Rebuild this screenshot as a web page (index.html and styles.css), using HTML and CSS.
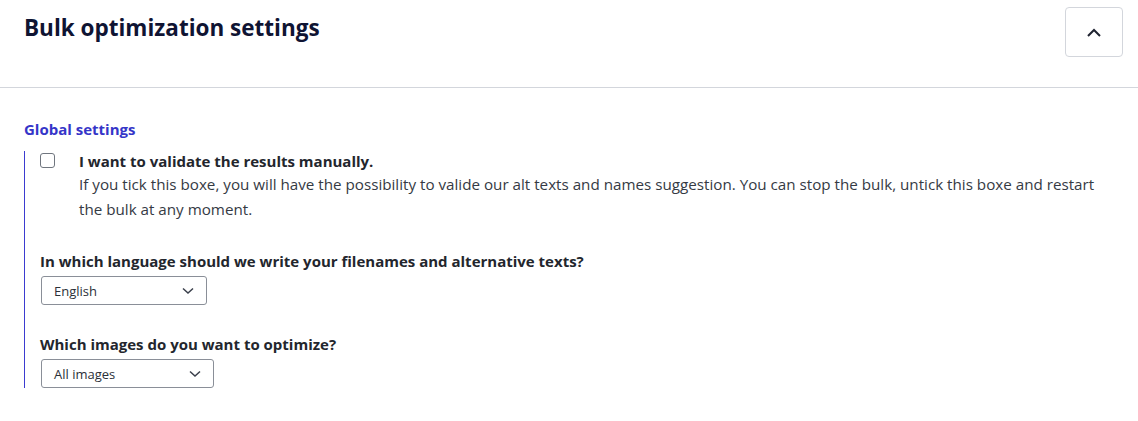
FILE: index.html
```html
<!DOCTYPE html>
<html lang="en">
<head>
<meta charset="utf-8">
<title>Bulk optimization settings</title>
<link rel="stylesheet" href="styles.css">
</head>
<body>
<div class="panel">
  <header class="header">
    <h2 class="title">Bulk optimization settings</h2>
    <button class="toggle" type="button" aria-label="Collapse">
      <svg width="14" height="9" viewBox="0 0 14 9"><path d="M1 8 L7 2 L13 8" fill="none" stroke="#1f2330" stroke-width="2"/></svg>
    </button>
  </header>
  <section class="content">
    <h3 class="section-title">Global settings</h3>
    <div class="group">
      <div class="check-row">
        <span class="checkbox"></span>
        <div class="check-text">
          <div class="check-label">I want to validate the results manually.</div>
          <p class="check-desc">If you tick this boxe, you will have the possibility to valide our alt texts and names suggestion. You can stop the bulk, untick this boxe and restart the bulk at any moment.</p>
        </div>
      </div>
      <div class="field">
        <div class="field-label">In which language should we write your filenames and alternative texts?</div>
        <div class="select select-lang"><span>English</span><svg width="12" height="8" viewBox="0 0 12 8"><path d="M1 1.5 L6 6 L11 1.5" fill="none" stroke="#3a3f4b" stroke-width="1.5"/></svg></div>
      </div>
      <div class="field">
        <div class="field-label">Which images do you want to optimize?</div>
        <div class="select select-images"><span>All images</span><svg width="12" height="8" viewBox="0 0 12 8"><path d="M1 1.5 L6 6 L11 1.5" fill="none" stroke="#3a3f4b" stroke-width="1.5"/></svg></div>
      </div>
    </div>
  </section>
</div>
</body>
</html>
```
FILE: styles.css
```css
html, body {
  margin: 0;
  background: #ffffff;
}
body {
  font-family: "Open Sans", "Noto Sans", sans-serif;
  color: #2c3038;
}
.header {
  display: flex;
  justify-content: space-between;
  align-items: flex-start;
  height: 80px;
  padding: 7px 15px 0 24px;
  border-bottom: 1px solid #d3d6dc;
}
.title {
  margin: 6px 0 0;
  font-size: 22.5px;
  line-height: 30px;
  font-weight: 700;
  color: #0f1433;
}
.toggle {
  width: 58px;
  height: 50px;
  border: 1px solid #d3d6dc;
  border-radius: 4px;
  background: #ffffff;
  display: flex;
  align-items: center;
  justify-content: center;
  padding: 0;
}
.content {
  padding: 31px 36px 0 24px;
}
.section-title {
  margin: 0 0 12px;
  font-size: 15px;
  line-height: 20px;
  font-weight: 700;
  color: #3535c8;
}
.group {
  border-left: 1px solid #3b3bd0;
  padding: 0 0 0 15px;
}
.check-row {
  display: flex;
  align-items: flex-start;
  gap: 24px;
}
.checkbox {
  flex: none;
  width: 13px;
  height: 13px;
  margin-top: 2px;
  border: 1px solid #70767f;
  border-radius: 3px;
}
.check-label {
  font-size: 15px;
  line-height: 20px;
  font-weight: 700;
  color: #23262d;
}
.check-desc {
  margin: 1px 0 0;
  font-size: 15.2px;
  line-height: 25px;
  color: #353a44;
}
.field {
  margin-top: 29px;
}
.field + .field {
  margin-top: 29px;
}
.field-label {
  font-size: 15px;
  line-height: 20px;
  font-weight: 700;
  color: #23262d;
  margin-bottom: 5px;
}
.select {
  display: flex;
  align-items: center;
  justify-content: space-between;
  box-sizing: border-box;
  height: 29px;
  margin-left: 1px;
  padding: 0 12px 0 12px;
  border: 1px solid #8a8f98;
  border-radius: 3px;
  font-size: 13px;
  color: #2c3038;
}
.select-lang { width: 166px; }
.select-images { width: 173px; }
```
